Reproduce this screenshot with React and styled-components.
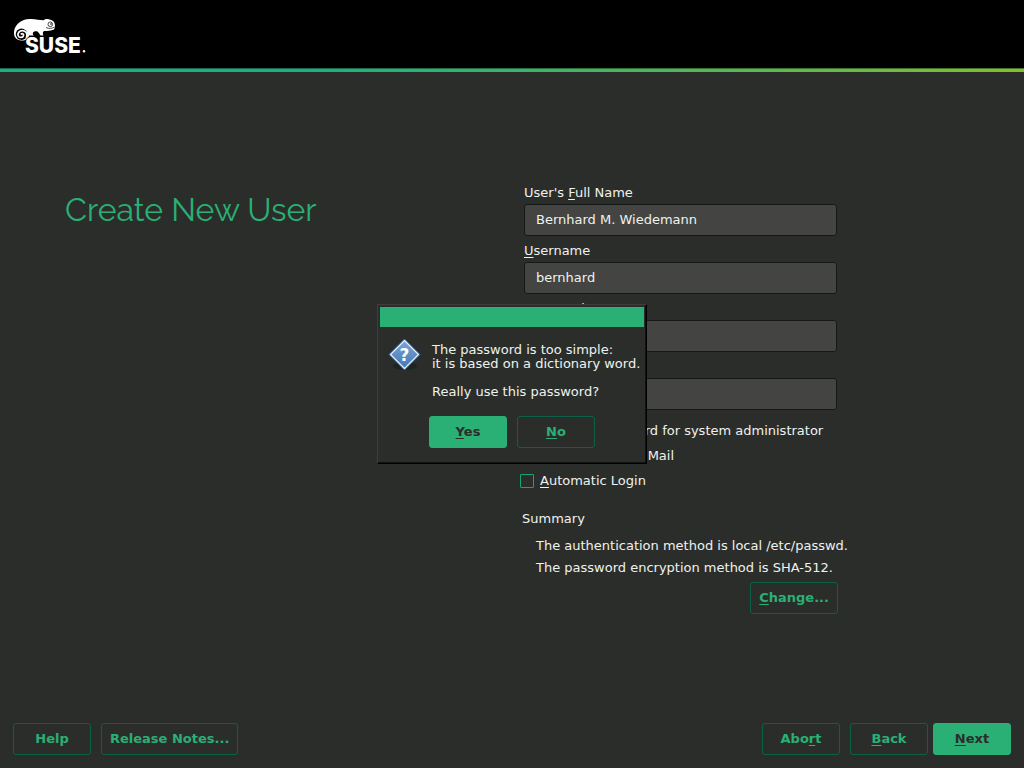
import React from "react";
import styled, { createGlobalStyle } from "styled-components";

const GlobalStyle = createGlobalStyle`
  *, *::before, *::after { box-sizing: border-box; }
  body {
    margin: 0;
    background: #2b2d2b;
    color: #eef2ee;
    font-family: "DejaVu Sans", sans-serif;
    font-size: 13px;
    line-height: 16px;
  }
  button, input { font: inherit; color: inherit; }
`;

const Page = styled.div`
  min-height: 100vh;
  display: flex;
  flex-direction: column;
`;

const Header = styled.header`
  background: #000;
  padding: 16px 12px 12px;
  &::after {
    content: "";
    display: block;
    height: 4px;
    margin: 12px -12px -12px;
    background: linear-gradient(90deg, #1fae80 0%, #1fae80 30%, #7fbf33 100%);
    border-top: 1px solid rgba(0, 0, 0, 0.4);
  }
`;

const LogoArt = styled.svg`
  display: block;
`;

const Main = styled.main`
  flex: 1;
  display: grid;
  grid-template-columns: 1fr 1fr;
  padding-top: 112px;
`;

const Title = styled.h1`
  margin: 0;
  padding: 4px 0 0 65px;
  color: #2aaf74;
  font-family: Raleway, Lato, sans-serif;
  font-weight: 400;
  font-size: 32px;
  line-height: 44px;
`;

const Form = styled.form`
  max-width: 326px;
  padding: 1px 0 0 8px;
`;

const Fields = styled.div`
  display: grid;
  gap: 7px;
  padding: 0 1px 0 4px;
`;

const FieldBox = styled.label`
  display: grid;
  gap: 3px;
`;

const TextInput = styled.input`
  width: 100%;
  height: 32px;
  padding: 0 11px 2px;
  border: 1px solid #161a17;
  border-radius: 3px;
  background: #444542;
  outline: none;
`;

const Checks = styled.div`
  display: grid;
  gap: 9px;
  padding-top: 13px;
`;

const CheckLabel = styled.label`
  display: flex;
  align-items: center;
  gap: 6px;
  white-space: nowrap;
`;

const CheckBox = styled.input`
  appearance: none;
  width: 14px;
  height: 14px;
  margin: 0;
  border: 1px solid #17a673;
  border-radius: 1px;
`;

const Summary = styled.section`
  padding: 22px 0 0 2px;
`;

const SummaryHeading = styled.h2`
  margin: 0 0 11px;
  font-size: 13px;
  line-height: 16px;
  font-weight: 400;
`;

const SummaryLine = styled.p`
  margin: 0 0 6px;
  padding-left: 14px;
  white-space: nowrap;
`;

const ButtonRow = styled.div`
  display: flex;
  justify-content: ${(p) => p.$align || "flex-start"};
  gap: ${(p) => p.$gap || 10}px;
`;

const Button = styled.button`
  min-width: 78px;
  height: 32px;
  padding: 0 8px 1px;
  border: 1px solid ${(p) => (p.$primary ? "#2aaf74" : "#0c6048")};
  border-radius: 3px;
  background: ${(p) => (p.$primary ? "#2aaf74" : "transparent")};
  color: ${(p) => (p.$primary ? "#2b2d2b" : "#2aaf74")};
  font-weight: 700;
  white-space: nowrap;
`;

const Footer = styled.footer`
  display: flex;
  justify-content: space-between;
  padding: 13px;
`;

const Key = styled.span`
  text-decoration: underline;
  text-decoration-thickness: 1px;
  text-underline-offset: 2px;
`;

const Dialog = styled.div`
  position: fixed;
  top: 50%;
  left: 50%;
  transform: translate(-50%, -50%);
  width: 270px;
  padding: 2px 2px 15px;
  border: 1px solid;
  border-color: #3d3f3d #000 #000 #3d3f3d;
  box-shadow: inset -1px -1px 0 #111311;
  background: #2b2d2b;
`;

const DialogBar = styled.div`
  height: 20px;
  background: #2aaf74;
`;

const DialogBody = styled.div`
  display: flex;
  gap: 10px;
  padding: 11px 4px 17px 8px;
`;

const DialogIcon = styled.svg`
  flex: none;
`;

const Message = styled.p`
  margin: 0;
  padding-top: 5px;
  line-height: 14px;
  white-space: pre;
`;

function Logo() {
  return (
    <LogoArt width="76" height="40" viewBox="12 16 76 40" role="img" aria-label="SUSE">
      <path
        fill="#fff"
        d="M14 34 C13.500 26 20 19 30 19 C36 18.800 40 20.500 44 20.300 C44.500 19 47 18.800 49.500 19.500 C52 20 54 21 54.500 23 C55.300 25 55 28 54 29.500 C51.500 31 47 31 44 31 C42.500 32 42.500 34 43.500 35.500 L40.500 35.500 C39.500 34 39 33 37.500 31.500 C35.500 31 34 31.500 33 32.500 C32.500 34 33 35 34 35.500 L29 35.500 C28.500 39 25 41 21 40.500 C17 40 14.300 37.500 14 34 Z"
      />
      <circle cx="21.500" cy="34.300" r="5.700" fill="#000" />
      <path
        fill="none"
        stroke="#fff"
        strokeWidth="1.700"
        strokeLinecap="round"
        d="M26.500 38 C28 34 26 30.700 22.500 30.700 C19 30.700 17.300 33.500 18.200 35.700 C19.200 38 22.800 38 23.500 35.700 C24 34 22.500 33 21.300 34"
      />
      <path fill="none" stroke="#000" strokeWidth="0.700" d="M46 27.500 C49 29 52 28.500 54.500 27" />
      <circle cx="50.300" cy="24.300" r="2.300" fill="none" stroke="#000" strokeWidth="0.700" />
      <circle cx="51" cy="24" r="0.800" fill="#000" />
      <text x="25" y="52.500" fill="#fff" stroke="#000" strokeWidth="1" paintOrder="stroke" fontFamily="Inter, sans-serif" fontWeight="800" fontSize="21">SUSE</text>
      <circle cx="84" cy="51.300" r="1.200" fill="#fff" />
    </LogoArt>
  );
}

function QuestionIcon() {
  return (
    <DialogIcon width="34" height="36" viewBox="0 0 34 36" aria-hidden="true">
      <defs>
        <linearGradient id="diamond" x1="0" y1="0" x2="0" y2="1">
          <stop offset="0" stopColor="#7ba6d8" />
          <stop offset="1" stopColor="#4477b5" />
        </linearGradient>
      </defs>
      <ellipse cx="17" cy="28" rx="12" ry="4" fill="#20241f" />
      <path d="M16.500 1 L32 16.500 L16.500 32 L1 16.500 Z" fill="#3465a4" stroke="#3465a4" strokeLinejoin="round" />
      <path d="M16.500 2.500 L30.500 16.500 L16.500 30.500 L2.500 16.500 Z" fill="url(#diamond)" stroke="#e8f0fa" strokeWidth="1.200" strokeLinejoin="round" />
      <text x="16.500" y="23" textAnchor="middle" fill="#fff" fontFamily="DejaVu Sans" fontWeight="700" fontSize="17">?</text>
    </DialogIcon>
  );
}

function Field({ label, ...rest }) {
  return (
    <FieldBox>
      <span>{label}</span>
      <TextInput {...rest} />
    </FieldBox>
  );
}

function Check({ children }) {
  return (
    <CheckLabel>
      <CheckBox type="checkbox" />
      <span>{children}</span>
    </CheckLabel>
  );
}

export default function App() {
  return (
    <Page>
      <GlobalStyle />
      <Header>
        <Logo />
      </Header>
      <Main>
        <Title>Create New User</Title>
        <Form onSubmit={(e) => e.preventDefault()}>
          <Fields>
            <Field label={<>User's <Key>F</Key>ull Name</>} defaultValue="Bernhard M. Wiedemann" />
            <Field label={<><Key>U</Key>sername</>} defaultValue="bernhard" />
            <Field label={<><Key>P</Key>assword</>} type="password" />
            <Field label={<>Confirm Pass<Key>w</Key>ord</>} type="password" />
          </Fields>
          <Checks>
            <Check>U<Key>s</Key>e this password for system administrator</Check>
            <Check><Key>R</Key>eceive System Mail</Check>
            <Check><Key>A</Key>utomatic Login</Check>
          </Checks>
          <Summary>
            <SummaryHeading>Summary</SummaryHeading>
            <SummaryLine>The authentication method is local /etc/passwd.</SummaryLine>
            <SummaryLine>The password encryption method is SHA-512.</SummaryLine>
            <ButtonRow $align="flex-end">
              <Button type="button"><Key>C</Key>hange...</Button>
            </ButtonRow>
          </Summary>
        </Form>
      </Main>
      <Footer>
        <ButtonRow>
          <Button>Help</Button>
          <Button>Release Notes...</Button>
        </ButtonRow>
        <ButtonRow $gap={5}>
          <ButtonRow>
            <Button>Abo<Key>r</Key>t</Button>
            <Button><Key>B</Key>ack</Button>
          </ButtonRow>
          <Button $primary><Key>N</Key>ext</Button>
        </ButtonRow>
      </Footer>
      <Dialog role="dialog" aria-label="Password warning">
        <DialogBar />
        <DialogBody>
          <QuestionIcon />
          <Message>{"The password is too simple:\nit is based on a dictionary word.\n\nReally use this password?"}</Message>
        </DialogBody>
        <ButtonRow $align="center">
          <Button $primary><Key>Y</Key>es</Button>
          <Button><Key>N</Key>o</Button>
        </ButtonRow>
      </Dialog>
    </Page>
  );
}
